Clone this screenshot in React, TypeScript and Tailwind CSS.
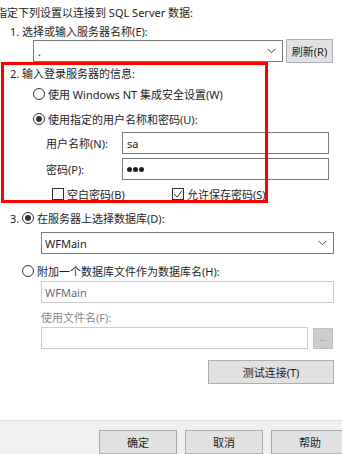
import { ReactNode } from 'react';

const Chevron = () => (
  <svg width="9" height="6" viewBox="0 0 9 6" className="shrink-0">
    <polyline points="0.5,0.8 4.5,4.8 8.5,0.8" fill="none" stroke="#444" strokeWidth="1" />
  </svg>
);

function Radio({ checked = false }: { checked?: boolean }) {
  return (
    <span className="w-[12px] h-[12px] rounded-full border border-[#333333] bg-white flex items-center justify-center shrink-0">
      {checked && <span className="w-[6px] h-[6px] rounded-full bg-[#333333]" />}
    </span>
  );
}

function Checkbox({ checked = false }: { checked?: boolean }) {
  return (
    <span className="w-[12px] h-[12px] border border-[#333333] bg-white flex items-center justify-center shrink-0">
      {checked && (
        <svg width="10" height="10" viewBox="0 0 10 10">
          <polyline points="1,5 4,8 9,1.5" fill="none" stroke="#333" strokeWidth="1" />
        </svg>
      )}
    </span>
  );
}

function Button({ children, className = '' }: { children: ReactNode; className?: string }) {
  return (
    <div
      className={`h-[24px] bg-[#e1e1e1] border border-[#adadad] flex items-center justify-center shrink-0 ${className}`}
    >
      {children}
    </div>
  );
}

export default function App() {
  return (
    <div className="relative w-[342px] h-[454px] overflow-hidden bg-white text-[11px] leading-none text-[#1e1e1e] font-[family-name:'Noto_Sans','Noto_Sans_CJK_SC',sans-serif]">
      <div className="h-[420px] flex flex-col">
        <div className="h-[16px] mt-[4px] -ml-[4px] flex items-center whitespace-nowrap">
          指定下列设置以连接到 SQL Server 数据:
        </div>

        <div className="h-[16px] mt-[3px] pl-[10px] flex items-center">1. 选择或输入服务器名称(E):</div>

        <div className="h-[24px] pl-[33px] flex items-center">
          <div className="w-[250px] h-[22px] border border-[#7a7a7a] flex items-center justify-between pl-[4px] pr-[6px]">
            <span>.</span>
            <Chevron />
          </div>
          <Button className="ml-[3px] w-[47px]">刷新(R)</Button>
        </div>

        <div className="h-[16px] mt-[2px] pl-[10px] flex items-center">2. 输入登录服务器的信息:</div>

        <div className="h-[16px] mt-[5px] pl-[33px] flex items-center gap-[3px]">
          <Radio />
          <span>使用 Windows NT 集成安全设置(W)</span>
        </div>

        <div className="h-[16px] mt-[9px] pl-[33px] flex items-center gap-[3px]">
          <Radio checked />
          <span>使用指定的用户名称和密码(U):</span>
        </div>

        <div className="h-[22px] mt-[5px] pl-[46px] flex items-center">
          <span className="w-[76px]">用户名称(N):</span>
          <div className="w-[207px] h-[22px] border border-[#7a7a7a] flex items-center pl-[4px]">sa</div>
        </div>

        <div className="h-[22px] mt-[4px] pl-[46px] flex items-center">
          <span className="w-[76px]">密码(P):</span>
          <div className="w-[207px] h-[22px] border border-[#7a7a7a] flex items-center pl-[4px] gap-[1px]">
            <span className="w-[5px] h-[5px] rounded-full bg-[#1e1e1e]" />
            <span className="w-[5px] h-[5px] rounded-full bg-[#1e1e1e]" />
            <span className="w-[5px] h-[5px] rounded-full bg-[#1e1e1e]" />
          </div>
        </div>

        <div className="h-[16px] mt-[6px] pl-[52px] flex items-center">
          <div className="w-[120px] flex items-center gap-[3px]">
            <Checkbox />
            <span>空白密码(B)</span>
          </div>
          <div className="flex items-center gap-[3px]">
            <Checkbox checked />
            <span>允许保存密码(S)</span>
          </div>
        </div>

        <div className="h-[16px] mt-[8px] pl-[10px] flex items-center">
          <span className="w-[12px]">3.</span>
          <Radio checked />
          <span className="ml-[3px]">在服务器上选择数据库(D):</span>
        </div>

        <div className="h-[22px] mt-[6px] pl-[41px] flex items-center">
          <div className="w-[293px] h-[22px] border border-[#7a7a7a] flex items-center justify-between pl-[3px] pr-[6px]">
            <span>WFMain</span>
            <Chevron />
          </div>
        </div>

        <div className="h-[16px] mt-[9px] pl-[22px] flex items-center gap-[3px]">
          <Radio />
          <span>附加一个数据库文件作为数据库名(H):</span>
        </div>

        <div className="h-[22px] mt-[2px] pl-[41px] flex items-center">
          <div className="w-[293px] h-[22px] border border-[#cccccc] flex items-center pl-[3px] text-[#6d6d6d]">WFMain</div>
        </div>

        <div className="h-[16px] mt-[6px] pl-[41px] flex items-center text-[#8a8a8a]">使用文件名(F):</div>

        <div className="h-[22px] mt-[2px] pl-[41px] flex items-center">
          <div className="w-[267px] h-[22px] border border-[#cccccc]" />
          <div className="ml-[5px] w-[20px] h-[21px] bg-[#cccccc] border border-[#bfbfbf] flex items-center justify-center text-[8px] text-[#8a8a8a]">
            ...
          </div>
        </div>

        <div className="h-[24px] mt-[11px] pl-[208px] flex items-center">
          <Button className="w-[126px]">测试连接(T)</Button>
        </div>
      </div>

      <div className="h-[34px] bg-[#f0f0f0] border-t border-[#dfdfdf] flex items-start gap-[8px] pl-[99px] pt-[9px]">
        <Button className="w-[78px]">确定</Button>
        <Button className="w-[78px]">取消</Button>
        <Button className="w-[78px]">帮助</Button>
      </div>

      <div className="absolute left-[1px] top-[62px] w-[267px] h-[141px] border-[3px] border-[#ff0000] pointer-events-none" />
    </div>
  );
}
